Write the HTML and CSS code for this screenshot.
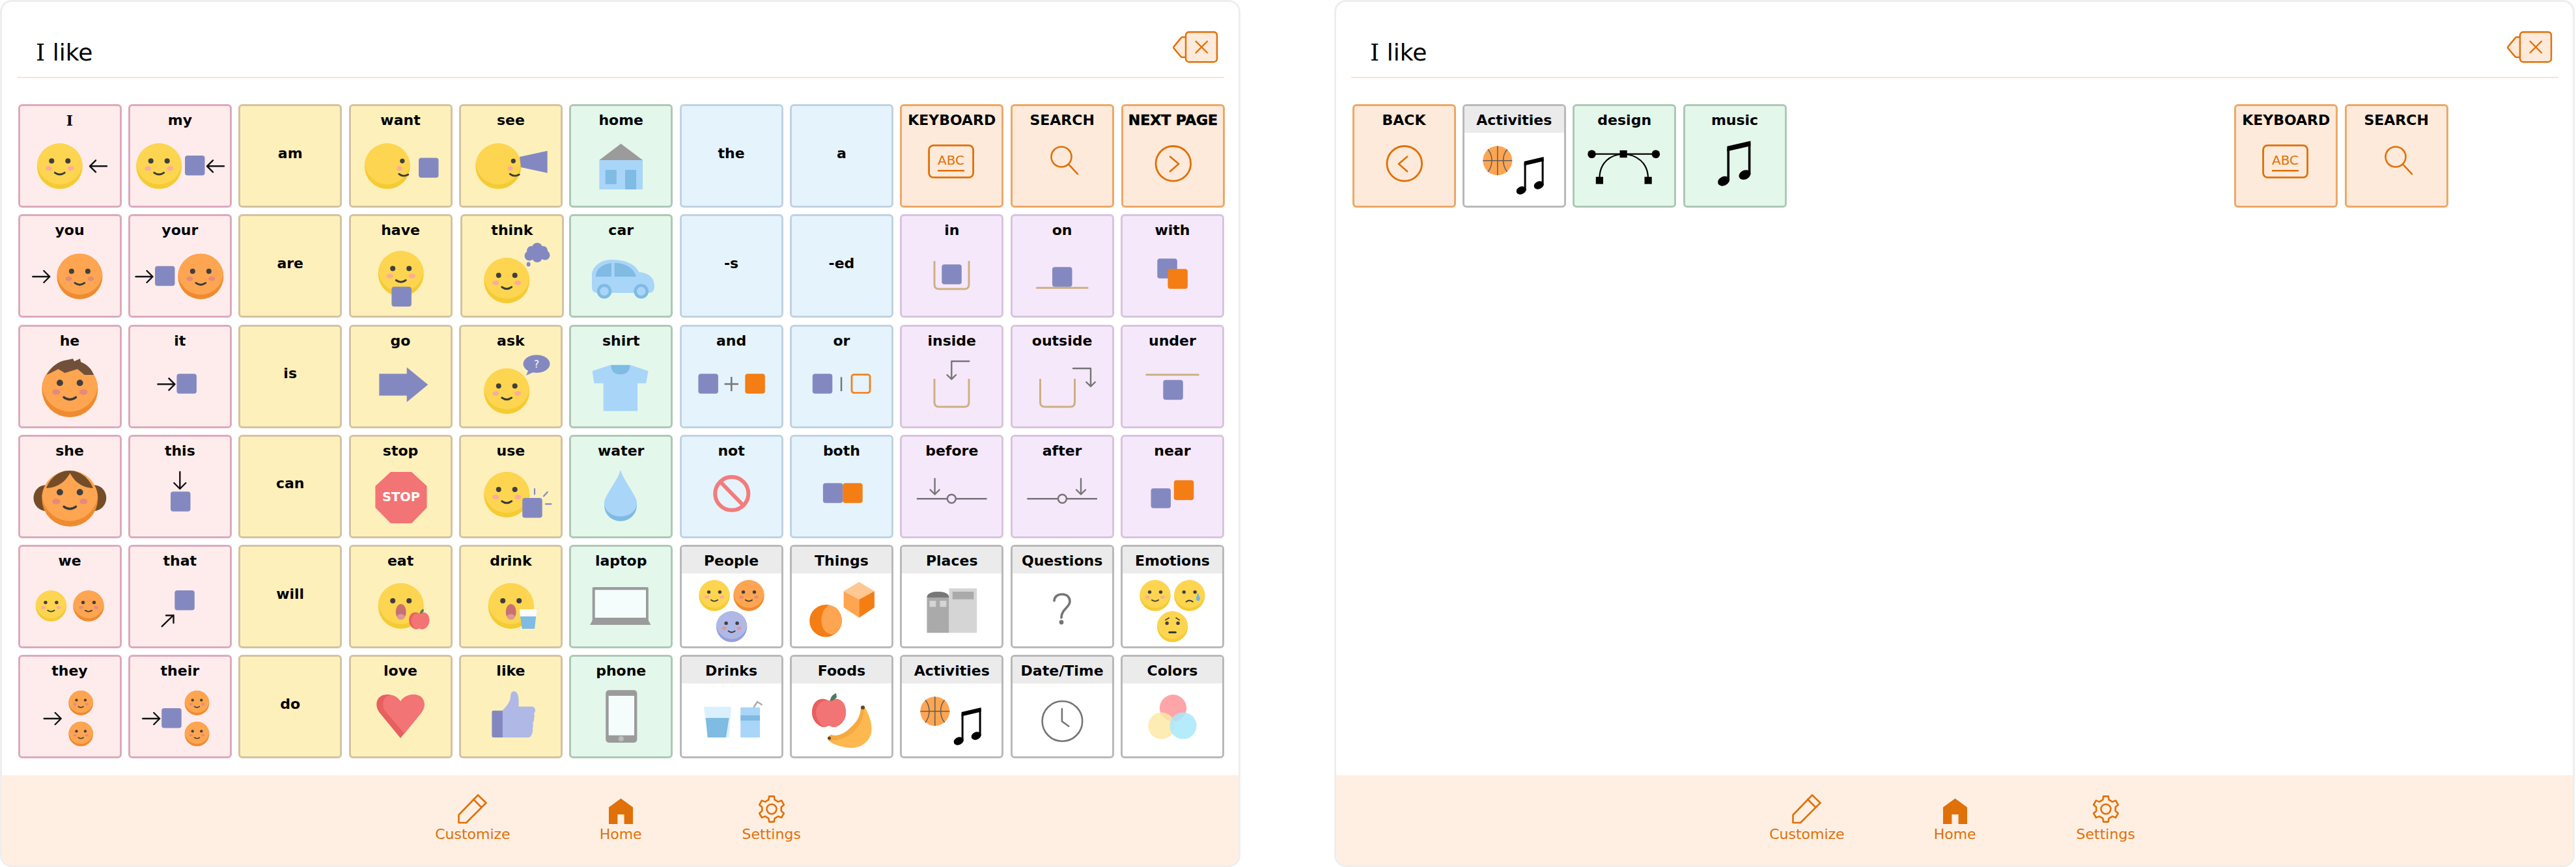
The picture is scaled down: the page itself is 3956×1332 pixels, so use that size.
FILE: index.html
```html
<!DOCTYPE html>
<html lang="en">
<head>
<meta charset="utf-8">
<title>I like</title>
<link rel="stylesheet" href="styles.css">
</head>
<body>
<svg class="defs" aria-hidden="true">
  <defs>
    <g id="feat"><circle cx="-12.5" cy="-8" r="4" fill="#3f3f3f"/><circle cx="12.5" cy="-8" r="4" fill="#3f3f3f"/><path d="M-7.5 10 Q0 15.5 7.5 10" fill="none" stroke="#3a3a3a" stroke-width="2.8" stroke-linecap="round"/></g>
    <g id="by"><circle r="35" fill="#f4cb33"/><path d="M-34.82 -3.5A35 35 0 0 1 34.82 -3.5A35 35 0 0 1 -34.82 -3.5Z" fill="#fdd550"/></g>
    <g id="bo"><circle r="35" fill="#ef8b2f"/><path d="M-34.82 -3.5A35 35 0 0 1 34.82 -3.5A35 35 0 0 1 -34.82 -3.5Z" fill="#fea551"/></g>
    <g id="bp"><circle r="35" fill="#979fdb"/><path d="M-34.82 -3.5A35 35 0 0 1 34.82 -3.5A35 35 0 0 1 -34.82 -3.5Z" fill="#b0b8e6"/></g>
    <g id="fy"><use href="#by"/><ellipse cx="-17" cy="3.5" rx="5" ry="3.5" fill="#fdaaa0"/><ellipse cx="17" cy="3.5" rx="5" ry="3.5" fill="#fdaaa0"/><use href="#feat"/></g>
    <g id="fo"><use href="#bo"/><ellipse cx="-17" cy="3.5" rx="5" ry="3.5" fill="#e58a7c"/><ellipse cx="17" cy="3.5" rx="5" ry="3.5" fill="#e58a7c"/><use href="#feat"/></g>
    <g id="fp"><use href="#bp"/><ellipse cx="-17" cy="3.5" rx="5" ry="3.5" fill="#e8948f"/><ellipse cx="17" cy="3.5" rx="5" ry="3.5" fill="#e8948f"/><use href="#feat"/></g>
    <g id="side"><use href="#by"/><circle cx="23" cy="-8" r="3.6" fill="#3f3f3f"/><ellipse cx="18.5" cy="3.5" rx="4" ry="3.5" fill="#fdaaa0"/><path d="M18 12 Q24 17 32 13" fill="none" stroke="#3a3a3a" stroke-width="2.8" stroke-linecap="round"/></g>
    <g id="gasp"><use href="#by"/><circle cx="-12.5" cy="-8" r="4" fill="#3f3f3f"/><circle cx="12.5" cy="-8" r="4" fill="#3f3f3f"/><ellipse cx="0" cy="9" rx="8" ry="12" fill="#c97073"/><path d="M-6.6 15.5 Q0 9 6.6 15.5 Q4 21 0 21 Q-4 21 -6.6 15.5Z" fill="#d99a9a"/></g>
    <rect id="bk" width="30.5" height="30.5" rx="4" fill="#8389c0"/>
    <rect id="ok" width="30.5" height="30.5" rx="4" fill="#f47d14"/>
    <path id="ar" d="M0 0H26M17 -9L26 0L17 9" fill="none" stroke="#111" stroke-width="2.4" stroke-linecap="round" stroke-linejoin="round"/>
    <path id="ga" d="M0 0H24M17 -7L24 0L17 7" fill="none" stroke="#757575" stroke-width="2.4" stroke-linecap="round" stroke-linejoin="round"/>
    <path id="cup" d="M0 0V36Q0 43 7 43H46Q53 43 53 36V0" fill="none" stroke="#cdb082" stroke-width="3"/>
    <g id="apple"><path d="M0 -18C6 -24 26 -24 26 0C26 14 14 22 8 22C4 22 2 20 0 20C-2 20 -4 22 -8 22C-14 22 -26 14 -26 0C-26 -24 -6 -24 0 -18Z" fill="#e85f60"/><path d="M2 -18C8 -23 26 -24 26 0C26 14 14 22 8 22C4 22 2 20 0 20C-4 21 -6 22 -8 21.5C-14 18 -20 8 -20 0C-20 -14 -8 -22 2 -18Z" fill="#f27474"/><path d="M2 -18C2 -24 6 -28 11 -30L12 -24C9 -20 5 -18 2 -18Z" fill="#4e7b5d"/></g>
    <g id="note"><path d="M13.5 51V9M40.5 43V2" fill="none" stroke="#000" stroke-width="3"/><path d="M12 6.5L42 -0.5V6L12 13Z" fill="#000"/><ellipse cx="7.5" cy="51" rx="7.8" ry="5.8" transform="rotate(-25 7.5 51)" fill="#000"/><ellipse cx="34.5" cy="43" rx="7.8" ry="5.8" transform="rotate(-25 34.5 43)" fill="#000"/></g>
    <g id="ico-keyboard"><rect x="41.6" y="19.3" width="68" height="49.4" rx="7" fill="none" stroke="#e07008" stroke-width="2.8"/><text class="abc" x="75.5" y="49.3">ABC</text><path d="M55 58.3H96" stroke="#e07008" stroke-width="2.5"/></g>
    <g id="ico-search" fill="none" stroke="#e07008" stroke-width="2.6" stroke-linecap="round"><circle cx="75" cy="37" r="15.5"/><path d="M86 48.3L100 63.3"/></g>
    <g id="ico-activities"><circle cx="50.8" cy="42.7" r="22.5" fill="#fea551"/><g fill="none" stroke="#5e5e5e" stroke-width="1.5"><path d="M50.8 20.2V65.2M28.3 42.7H73.3"/><path d="M36 25.5C44 35 44 50 36 60"/><path d="M65.6 25.5C57.6 35 57.6 50 65.6 60"/></g><use href="#note" x="79.6" y="37.5"/></g>
    <g id="ico-circle"><circle cx="76.8" cy="47.3" r="26.8" fill="none" stroke="#e07008" stroke-width="2.8"/></g>
  </defs>
</svg>

<main class="desk">
  <section class="panel">
    <header class="head">
      <div class="title"><span class="ser">I</span> like</div>
      <svg class="del" viewBox="0 0 70 49" width="70" height="49"><path d="M20 9H15Q13 9 12 11L1.5 24Q1 25 1.5 26L12 38.5Q13 40 15 40H20" fill="#feeada" stroke="#e07008" stroke-width="2.5"/><rect x="20" y="1.2" width="48" height="46" rx="5" fill="#feeada" stroke="#e07008" stroke-width="2.5"/><path d="M35.5 15.5L53 33M53 15.5L35.5 33" stroke="#e07008" stroke-width="2.4" stroke-linecap="round"/></svg>
    </header>
    <div class="grid">
      <!-- row 1 -->
      <div class="card pink"><div class="label"><span class="ser">I</span></div><svg class="ico" viewBox="0 0 153 112"><use href="#fy" transform="translate(60.8 51.3)"/><use href="#ar" transform="translate(133 51.3) rotate(180)"/></svg></div>
      <div class="card pink"><div class="label">my</div><svg class="ico" viewBox="0 0 153 112"><use href="#fy" transform="translate(44.2 51.3)"/><use href="#bk" x="84" y="35"/><use href="#ar" transform="translate(144 51.3) rotate(180)"/></svg></div>
      <div class="card yellow word"><div class="label">am</div></div>
      <div class="card yellow"><div class="label">want</div><svg class="ico" viewBox="0 0 153 112"><use href="#side" transform="translate(55.8 51.3)"/><use href="#bk" x="104" y="38.5"/></svg></div>
      <div class="card yellow"><div class="label">see</div><svg class="ico" viewBox="0 0 153 112"><use href="#side" transform="translate(57.3 51.3)"/><path d="M90 37L132.6 27.7V61.7L92 53Z" fill="#8389c0"/></svg></div>
      <div class="card green"><div class="label">home</div><svg class="ico" viewBox="0 0 153 112"><path d="M43.4 42L76.5 16.7L110 42Z" fill="#9b9b9b"/><rect x="43.4" y="42" width="66.6" height="45" fill="#a9d5f9"/><rect x="52.8" y="57" width="17" height="22" rx="1" fill="#7fbbe2"/><rect x="83" y="57" width="17" height="30" rx="1" fill="#7fbbe2"/></svg></div>
      <div class="card blue word"><div class="label">the</div></div>
      <div class="card blue word"><div class="label">a</div></div>
      <div class="card orange"><div class="label">KEYBOARD</div><svg class="ico" viewBox="0 0 153 112"><use href="#ico-keyboard"/></svg></div>
      <div class="card orange"><div class="label">SEARCH</div><svg class="ico" viewBox="0 0 153 112"><use href="#ico-search"/></svg></div>
      <div class="card orange nudge-1"><div class="label heavy">NEXT PAGE</div><svg class="ico" viewBox="0 0 153 112"><use href="#ico-circle"/><path d="M72 36.7L85.2 47.7L72 59.3" fill="none" stroke="#e07008" stroke-width="2.6" stroke-linecap="round" stroke-linejoin="round"/></svg></div>
      <!-- row 2 -->
      <div class="card pink"><div class="label">you</div><svg class="ico" viewBox="0 0 153 112"><use href="#ar" transform="translate(19.3 52)"/><use href="#fo" transform="translate(91.4 51.7)"/></svg></div>
      <div class="card pink"><div class="label">your</div><svg class="ico" viewBox="0 0 153 112"><use href="#ar" transform="translate(8.5 52)"/><use href="#bk" x="38" y="35.7"/><use href="#fo" transform="translate(108.3 51.7)"/></svg></div>
      <div class="card yellow word"><div class="label">are</div></div>
      <div class="card yellow"><div class="label">have</div><svg class="ico" viewBox="0 0 153 112"><use href="#fy" transform="translate(76.7 47.5)"/><use href="#bk" x="62.4" y="67.5"/></svg></div>
      <div class="card yellow nudge-2"><div class="label">think</div><svg class="ico" viewBox="0 0 153 112"><use href="#fy" transform="translate(68.2 58)"/><g fill="#8389c0"><circle cx="115" cy="15" r="10"/><circle cx="115" cy="8" r="8"/><circle cx="106" cy="12" r="7"/><circle cx="124" cy="12" r="7"/><circle cx="103" cy="20" r="7.5"/><circle cx="127" cy="19" r="7.5"/><circle cx="115" cy="22" r="8"/><ellipse cx="101.6" cy="33" rx="3" ry="3.6"/></g></svg></div>
      <div class="card green"><div class="label">car</div><svg class="ico" viewBox="0 0 153 112"><path d="M32 68V50C32 36 46 26 62 26C82 26 98 32 104.5 45C118 46 128 53 128 66C128 73 125 77 120 77H40C35 77 32 74 32 68Z" fill="#a9d5f9"/><path d="M38 52C38 40 48 33 62 31V52Z" fill="#7fbbe2"/><path d="M66.6 31C82 31 96 38 100 52H66.6Z" fill="#7fbbe2"/><g fill="#a9d5f9" stroke="#7fbbe2" stroke-width="4.5"><circle cx="51" cy="74.5" r="9"/><circle cx="107.7" cy="74.5" r="9"/></g></svg></div>
      <div class="card blue word"><div class="label">-s</div></div>
      <div class="card blue word"><div class="label">-ed</div></div>
      <div class="card purple"><div class="label">in</div><svg class="ico" viewBox="0 0 153 112"><use href="#cup" x="50" y="28"/><use href="#bk" x="61.3" y="33.3"/></svg></div>
      <div class="card purple"><div class="label">on</div><svg class="ico" viewBox="0 0 153 112"><use href="#bk" x="61" y="37.3"/><path d="M37.5 69.3H115" stroke="#cdb082" stroke-width="3" stroke-linecap="round"/></svg></div>
      <div class="card purple"><div class="label">with</div><svg class="ico" viewBox="0 0 153 112"><use href="#bk" x="53.3" y="24.3"/><use href="#ok" x="69.4" y="40.3"/></svg></div>
      <!-- row 3 -->
      <div class="card pink"><div class="label">he</div><svg class="ico" viewBox="0 0 153 112"><use href="#fo" transform="translate(76.3 55) scale(1.23)"/><path d="M40.7 33C48 20 58 12 72 10L81 8L83 12L92 8L93 13C103 17 110 24 113 33H99L88 24L68.5 30L58.6 24Z" fill="#715039"/></svg></div>
      <div class="card pink"><div class="label">it</div><svg class="ico" viewBox="0 0 153 112"><use href="#ar" transform="translate(42.4 47.3)"/><use href="#bk" x="71.4" y="31.3"/></svg></div>
      <div class="card yellow word"><div class="label">is</div></div>
      <div class="card yellow"><div class="label">go</div><svg class="ico" viewBox="0 0 153 112"><path d="M43.3 31.3H85.7V21.3L118.3 48L85.7 74.7V64.7H43.3Z" fill="#8389c0"/></svg></div>
      <div class="card yellow"><div class="label">ask</div><svg class="ico" viewBox="0 0 153 112"><use href="#fy" transform="translate(70.2 58)"/><ellipse cx="116" cy="16" rx="20.5" ry="13.7" fill="#8389c0"/><path d="M100 33.7L105 22L113 28Z" fill="#8389c0"/><text class="bubble-q" x="116" y="22">?</text></svg></div>
      <div class="card green"><div class="label">shirt</div><svg class="ico" viewBox="0 0 153 112"><path d="M33.1 27.3L61.3 18H90.3L118 27.3L114.8 45.3H101.5V88H50.1V45.3H35.8Z" fill="#a9d5f9" stroke="#a9d5f9" stroke-linejoin="round"/><path d="M61.3 18H90.3C90.3 28 84 32.3 75.8 32.3C67.6 32.3 61.3 28 61.3 18Z" fill="#7fbbe2"/></svg></div>
      <div class="card blue"><div class="label">and</div><svg class="ico" viewBox="0 0 153 112"><use href="#bk" x="25.4" y="31.3"/><path d="M65.6 47H87M76.3 36V58" stroke="#757575" stroke-width="2.5"/><use href="#ok" x="97.3" y="31.3"/></svg></div>
      <div class="card blue"><div class="label">or</div><svg class="ico" viewBox="0 0 153 112"><use href="#bk" x="31.8" y="31.3"/><path d="M76 36.3V58" stroke="#757575" stroke-width="2.5"/><rect x="92" y="32.5" width="28" height="28" rx="3.5" fill="none" stroke="#f47d14" stroke-width="2.7"/></svg></div>
      <div class="card purple"><div class="label">inside</div><svg class="ico" viewBox="0 0 153 112"><use href="#cup" x="50" y="39"/><path d="M103.3 12H76.3V39.5M69.5 33L76.3 39.7L83 33" fill="none" stroke="#757575" stroke-width="2.4" stroke-linecap="round" stroke-linejoin="round"/></svg></div>
      <div class="card purple"><div class="label">outside</div><svg class="ico" viewBox="0 0 153 112"><use href="#cup" x="42.5" y="39"/><path d="M93 23H120V50.5M113.2 44L120 50.7L126.8 44" fill="none" stroke="#757575" stroke-width="2.4" stroke-linecap="round" stroke-linejoin="round"/></svg></div>
      <div class="card purple"><div class="label">under</div><svg class="ico" viewBox="0 0 153 112"><path d="M36.8 32.7H116.3" stroke="#cdb082" stroke-width="3" stroke-linecap="round"/><use href="#bk" x="62.3" y="40.7"/></svg></div>
      <!-- row 4 -->
      <div class="card pink"><div class="label">she</div><svg class="ico" viewBox="0 0 153 112"><ellipse cx="40" cy="53" rx="19.5" ry="20" fill="#744d28"/><ellipse cx="112.7" cy="53" rx="19.5" ry="20" fill="#744d28"/><use href="#fo" transform="translate(76.3 54) scale(1.23)"/><path d="M40 38C46 22 60 11 75.6 11C91 11 106 22 112 38C98 37 86 32 76.5 15C67 32 54 37 40 38Z" fill="#744d28"/></svg></div>
      <div class="card pink"><div class="label">this</div><svg class="ico" viewBox="0 0 153 112"><use href="#ar" transform="translate(76.3 13) rotate(90)"/><use href="#bk" x="62" y="43.3"/></svg></div>
      <div class="card yellow word"><div class="label">can</div></div>
      <div class="card yellow"><div class="label">stop</div><svg class="ico" viewBox="0 0 153 112"><path d="M61 13H93L116.5 34.7V68L93 92H61L37.4 68V34.7Z" fill="#f27474"/><text class="stop" x="77" y="58">STOP</text></svg></div>
      <div class="card yellow"><div class="label">use</div><svg class="ico" viewBox="0 0 153 112"><use href="#fy" transform="translate(70.2 48)"/><use href="#bk" x="94.2" y="53"/><path d="M113 39V47.3M127 50.3L132.7 44M130 62.3H138.5" stroke="#8389c0" stroke-width="2.2" stroke-linecap="round"/></svg></div>
      <div class="card green"><div class="label">water</div><svg class="ico" viewBox="0 0 153 112"><path d="M76 10.7C80 26 101 50 101 64C101 78 90 88.7 76 88.7C62 88.7 51 78 51 64C51 50 72 26 76 10.7Z" fill="#7fbbe2"/><path d="M76 10.7C80 26 101 50 101 60C101 73 90 81.3 76 81.3C62 81.3 51 73 51 60C51 50 72 26 76 10.7Z" fill="#a9d5f9"/></svg></div>
      <div class="card blue"><div class="label">not</div><svg class="ico" viewBox="0 0 153 112"><circle cx="76.8" cy="46.3" r="25.5" fill="none" stroke="#f27c7c" stroke-width="6"/><path d="M59 28L95 65" stroke="#f27c7c" stroke-width="6"/></svg></div>
      <div class="card blue"><div class="label">both</div><svg class="ico" viewBox="0 0 153 112"><use href="#bk" x="47.9" y="30.3"/><use href="#ok" x="78.2" y="30.3"/></svg></div>
      <div class="card purple"><div class="label">before</div><svg class="ico" viewBox="0 0 153 112"><path d="M22.9 54.3H130.5" stroke="#757575" stroke-width="2.5"/><circle cx="76.3" cy="54.3" r="6.5" fill="#f5e8fb" stroke="#757575" stroke-width="2.5"/><use href="#ga" transform="translate(50.6 23.5) rotate(90)"/></svg></div>
      <div class="card purple"><div class="label">after</div><svg class="ico" viewBox="0 0 153 112"><path d="M22.3 54.3H129.9" stroke="#757575" stroke-width="2.5"/><circle cx="76.4" cy="54.3" r="6.5" fill="#f5e8fb" stroke="#757575" stroke-width="2.5"/><use href="#ga" transform="translate(105 23.5) rotate(90)"/></svg></div>
      <div class="card purple"><div class="label">near</div><svg class="ico" viewBox="0 0 153 112"><use href="#ok" x="78.8" y="25.7"/><use href="#bk" x="43.5" y="38.3"/></svg></div>
      <!-- row 5 -->
      <div class="card pink"><div class="label">we</div><svg class="ico" viewBox="0 0 153 112"><use href="#fy" transform="translate(47.4 50) scale(.677)"/><use href="#fo" transform="translate(105 50) scale(.677)"/></svg></div>
      <div class="card pink"><div class="label">that</div><svg class="ico" viewBox="0 0 153 112"><use href="#bk" x="68.3" y="26"/><path d="M48.7 81.3L66.5 64M55 64.5H66.5V76" fill="none" stroke="#111" stroke-width="2.4" stroke-linecap="round" stroke-linejoin="round"/></svg></div>
      <div class="card yellow word"><div class="label">will</div></div>
      <div class="card yellow"><div class="label">eat</div><svg class="ico" viewBox="0 0 153 112"><use href="#gasp" transform="translate(76.7 50)"/><use href="#apple" transform="translate(104.7 72.5) scale(.6)"/></svg></div>
      <div class="card yellow"><div class="label">drink</div><svg class="ico" viewBox="0 0 153 112"><use href="#gasp" transform="translate(76.7 50)"/><path d="M89.8 55H116.5L115.2 66H91Z" fill="#fff"/><path d="M91 66H115.2L113 85H93.8Z" fill="#7fbbe2"/></svg></div>
      <div class="card green"><div class="label">laptop</div><svg class="ico" viewBox="0 0 153 112"><rect x="32.7" y="21" width="86.1" height="54" rx="2" fill="#9b9b9b"/><rect x="36.7" y="25.3" width="78.3" height="42.7" fill="#f5fdfc"/><path d="M32.7 72.3H118.8L122.4 79H29.1Z" fill="#9b9b9b"/></svg></div>
      <div class="card cat"><div class="label">People</div><svg class="ico" viewBox="0 0 153 112"><use href="#fy" transform="translate(50 34) scale(.677)"/><use href="#fo" transform="translate(103 34) scale(.677)"/><use href="#fp" transform="translate(76.6 81.8) scale(.677)"/></svg></div>
      <div class="card cat"><div class="label">Things</div><svg class="ico" viewBox="0 0 153 112"><circle cx="52" cy="72.8" r="24.8" fill="#f47d14"/><path d="M57 48.5C69 50 77 60 76.8 72.8C76.6 82 72 90 64 93.5C55 94 48 88 46 78C44 65 48 54 57 48.5Z" fill="#fea551"/><path d="M103.3 13L126.9 27.3L103.3 40L79.6 27.3Z" fill="#fec793"/><path d="M79.6 27.3L103.3 40V68L79.6 52.3Z" fill="#fea551"/><path d="M126.9 27.3L103.3 40V68L126.9 52.3Z" fill="#f47d14"/></svg></div>
      <div class="card cat"><div class="label">Places</div><svg class="ico" viewBox="0 0 153 112"><rect x="72.4" y="23" width="42.8" height="68.3" rx="1" fill="#d5d5d5"/><rect x="77.8" y="28" width="32.6" height="11.7" fill="#aaa"/><path d="M38.5 37C38.5 31 46 28 55.5 28C65 28 72.4 31 72.4 37V91.3H38.5Z" fill="#aaa"/><path d="M38.5 37C38.5 31 46 28 55.5 28C65 28 72.4 31 72.4 37Z" fill="#777"/><rect x="42.5" y="42" width="9.8" height="9.3" fill="#d5d5d5"/><rect x="58.5" y="42" width="9.9" height="9.3" fill="#d5d5d5"/></svg></div>
      <div class="card cat"><div class="label">Questions</div><svg class="ico" viewBox="0 0 153 112"><path d="M64 42C64 36 69 32 76 32C84 32 88 37 88 43C88 52 75 55 75 68" fill="none" stroke="#757575" stroke-width="3.6" stroke-linecap="round"/><circle cx="75" cy="75" r="3.4" fill="#757575"/></svg></div>
      <div class="card cat"><div class="label">Emotions</div><svg class="ico" viewBox="0 0 153 112"><use href="#fy" transform="translate(50 34) scale(.677)"/><g transform="translate(102.7 34) scale(.677)"><use href="#by"/><circle cx="-12.5" cy="-8" r="4" fill="#3f3f3f"/><circle cx="12.5" cy="-8" r="4" fill="#3f3f3f"/><path d="M-7.5 14 Q0 8 7.5 14" fill="none" stroke="#3a3a3a" stroke-width="3" stroke-linecap="round"/><path d="M19 -6C22 0 24 4 24 7C24 10 22 12 19.5 12C17 12 15 10 15 7C15 4 17 0 19 -6Z" fill="#6db7e8"/></g><g transform="translate(76.6 81.8) scale(.677)"><use href="#by"/><circle cx="-12.5" cy="-8" r="4" fill="#3f3f3f"/><circle cx="12.5" cy="-8" r="4" fill="#3f3f3f"/><path d="M-16 -15L-8 -20M16 -15L8 -20" stroke="#3a3a3a" stroke-width="2.4" stroke-linecap="round"/><path d="M-7 13H7" stroke="#3a3a3a" stroke-width="4.5" stroke-linecap="round"/></g></svg></div>
      <!-- row 6 -->
      <div class="card pink"><div class="label">they</div><svg class="ico" viewBox="0 0 153 112"><use href="#ar" transform="translate(36.7 54)"/><use href="#fo" transform="translate(93.2 30) scale(.54)"/><use href="#fo" transform="translate(93.2 77.7) scale(.54)"/></svg></div>
      <div class="card pink"><div class="label">their</div><svg class="ico" viewBox="0 0 153 112"><use href="#ar" transform="translate(19.2 54)"/><use href="#bk" x="48.2" y="38"/><use href="#fo" transform="translate(102.5 30) scale(.54)"/><use href="#fo" transform="translate(102.5 77.7) scale(.54)"/></svg></div>
      <div class="card yellow word"><div class="label">do</div></div>
      <div class="card yellow"><div class="label">love</div><svg class="ico" viewBox="0 0 153 112"><path d="M76 84L44 45C35 33 39 17 56 17C66 17 73 22 76 28C79 22 87 17 96 17C113 17 117 34 108 45Z" fill="#e85f60"/><path d="M82 77L108 45C117 34 113 17 96 17C87 17 79 22 76 28C73 23 68 19 62 18C50 18 46 32 52 42Z" fill="#f27474"/></svg></div>
      <div class="card yellow"><div class="label">like</div><svg class="ico" viewBox="0 0 153 112"><path d="M64 41C70 35 76 28 76 20C76 14 79 12 81 12C86 12 88 18 88.5 24V35.5H108C112 35.5 114 38 114 41C114 44 113 45 112 46C113 48 113 52 112 55C112 58 111 60 110 61C111 63 111 66 110 69C111 71 109 83 104 83H64Z" fill="#b0b8e6"/><path d="M64 41.7H50Q47.4 41.7 47.4 44V81Q47.4 83 50 83H64Z" fill="#8389c0"/></svg></div>
      <div class="card green"><div class="label">phone</div><svg class="ico" viewBox="0 0 153 112"><rect x="53.2" y="10.3" width="48.2" height="80.7" rx="5" fill="#9b9b9b"/><rect x="57.7" y="19" width="39.3" height="60.7" fill="#f5fdfc"/><circle cx="76.9" cy="85" r="4" fill="#bdbdbd"/></svg></div>
      <div class="card cat"><div class="label">Drinks</div><svg class="ico" viewBox="0 0 153 112"><path d="M33.9 36H75.9L72.5 83H39.7Z" fill="#d9f1fd"/><path d="M36.8 53H72.6L67.8 83H39.7Z" fill="#7fbbe2"/><path d="M110.3 37L116 28.3L123.6 33" fill="none" stroke="#a8a8a8" stroke-width="2.4"/><rect x="90.2" y="36.7" width="29.8" height="46.3" rx="1" fill="#a9d5f9"/><rect x="90.2" y="49" width="29.8" height="8" fill="#7fbbe2"/></svg></div>
      <div class="card cat"><div class="label">Foods</div><svg class="ico" viewBox="0 0 153 112"><use href="#apple" transform="translate(57 45)"/><path d="M106 37C108 35 112 36 113 38C120 50 124 65 122 76C119 90 105 100 90 99C75 98 62 93 57 88C55 84 57 80 60 79C70 82 80 78 90 68C102 58 106 47 106 37Z" fill="#feb84f"/><path d="M106 37C108 35 110 36 111 37C111 52 104 68 92 77C80 86 68 88 57 88C55 84 57 80 60 79C70 82 80 78 90 68C102 58 106 47 106 37Z" fill="#f5aa3f"/><circle cx="109" cy="37" r="3" fill="#5f4a30"/><circle cx="57.5" cy="84" r="2.6" fill="#5f4a30"/></svg></div>
      <div class="card cat"><div class="label">Activities</div><svg class="ico" viewBox="0 0 153 112"><use href="#ico-activities"/></svg></div>
      <div class="card cat"><div class="label">Date/Time</div><svg class="ico" viewBox="0 0 153 112"><circle cx="76.4" cy="58" r="30.8" fill="none" stroke="#757575" stroke-width="2.6"/><path d="M75.9 39V58.3L86.2 65.7" fill="none" stroke="#757575" stroke-width="2.6" stroke-linecap="round" stroke-linejoin="round"/></svg></div>
      <div class="card cat"><div class="label">Colors</div><svg class="ico" viewBox="0 0 153 112"><circle cx="77.5" cy="37.7" r="20.6" fill="#fea5a9"/><circle cx="59.8" cy="65" r="20.6" fill="#fde9a6" opacity=".85"/><circle cx="93" cy="65" r="20.6" fill="#a9e8fa" opacity=".85"/></svg></div>
    </div>
    <footer class="foot">
      <div class="foot-item"><svg class="foot-ico" viewBox="0 0 45 46" width="45" height="46"><path d="M31 1.5L43.5 13.5L13 44H1.5V32Z M24 8L36.5 20.5" fill="none" stroke="#e07008" stroke-width="2.6" stroke-linejoin="round" stroke-linecap="round"/></svg><span>Customize</span></div>
      <div class="foot-item"><svg class="foot-ico" viewBox="0 0 37 46" width="37" height="46"><path d="M18.5 6.7L37 20.2V46H23.6V31.2H13.4V46H0V20.2Z" fill="#e07008"/></svg><span>Home</span></div>
      <div class="foot-item far"><svg class="foot-ico" viewBox="0 0 40 46" width="40" height="46"><g transform="translate(0 2)" fill="none" stroke="#e07008" stroke-width="2.6" stroke-linejoin="round"><path d="M24.6 6.7L23.8 1.4H16.2L15.4 6.7L10 9.9L4.9 7.9L1.1 14.5L5.3 17.9V24.1L1.1 27.5L4.9 34.1L10 32.1L15.4 35.3L16.2 40.6H23.8L24.6 35.3L30 32.1L35.1 34.1L38.9 27.5L34.7 24.1V17.9L38.9 14.5L35.1 7.9L30 9.9Z"/><circle cx="20" cy="21" r="7.5"/></g></svg><span>Settings</span></div>
    </footer>
  </section>

  <section class="panel">
    <header class="head">
      <div class="title"><span class="ser">I</span> like</div>
      <svg class="del" viewBox="0 0 70 49" width="70" height="49"><path d="M20 9H15Q13 9 12 11L1.5 24Q1 25 1.5 26L12 38.5Q13 40 15 40H20" fill="#feeada" stroke="#e07008" stroke-width="2.5"/><rect x="20" y="1.2" width="48" height="46" rx="5" fill="#feeada" stroke="#e07008" stroke-width="2.5"/><path d="M35.5 15.5L53 33M53 15.5L35.5 33" stroke="#e07008" stroke-width="2.4" stroke-linecap="round"/></svg>
    </header>
    <div class="grid">
      <div class="card orange"><div class="label">BACK</div><svg class="ico" viewBox="0 0 153 112"><use href="#ico-circle"/><path d="M81 36.7L68 47.7L81 59.3" fill="none" stroke="#e07008" stroke-width="2.6" stroke-linecap="round" stroke-linejoin="round"/></svg></div>
      <div class="card cat"><div class="label">Activities</div><svg class="ico" viewBox="0 0 153 112"><use href="#ico-activities"/></svg></div>
      <div class="card green"><div class="label">design</div><svg class="ico" viewBox="0 0 153 112"><path d="M26.5 32.7H124.9" stroke="#000" stroke-width="2.2"/><path d="M38.4 70C38.4 46 55 33 75 33C95 33 113 46 113 70" fill="none" stroke="#000" stroke-width="2.2"/><circle cx="26.5" cy="32.7" r="6.3"/><circle cx="124.9" cy="32.7" r="6.3"/><rect x="69.5" y="27" width="11.2" height="11.2"/><rect x="32.8" y="67.7" width="11.2" height="11"/><rect x="107.5" y="67.7" width="11.2" height="11"/></svg></div>
      <div class="card green"><div class="label">music</div><svg class="ico" viewBox="0 0 153 112"><use href="#note" transform="translate(50 13) scale(1.2)"/></svg></div>
      <div class="card orange col-9"><div class="label">KEYBOARD</div><svg class="ico" viewBox="0 0 153 112"><use href="#ico-keyboard"/></svg></div>
      <div class="card orange"><div class="label">SEARCH</div><svg class="ico" viewBox="0 0 153 112"><use href="#ico-search"/></svg></div>
    </div>
    <footer class="foot">
      <div class="foot-item"><svg class="foot-ico" viewBox="0 0 45 46" width="45" height="46"><path d="M31 1.5L43.5 13.5L13 44H1.5V32Z M24 8L36.5 20.5" fill="none" stroke="#e07008" stroke-width="2.6" stroke-linejoin="round" stroke-linecap="round"/></svg><span>Customize</span></div>
      <div class="foot-item"><svg class="foot-ico" viewBox="0 0 37 46" width="37" height="46"><path d="M18.5 6.7L37 20.2V46H23.6V31.2H13.4V46H0V20.2Z" fill="#e07008"/></svg><span>Home</span></div>
      <div class="foot-item far"><svg class="foot-ico" viewBox="0 0 40 46" width="40" height="46"><g transform="translate(0 2)" fill="none" stroke="#e07008" stroke-width="2.6" stroke-linejoin="round"><path d="M24.6 6.7L23.8 1.4H16.2L15.4 6.7L10 9.9L4.9 7.9L1.1 14.5L5.3 17.9V24.1L1.1 27.5L4.9 34.1L10 32.1L15.4 35.3L16.2 40.6H23.8L24.6 35.3L30 32.1L35.1 34.1L38.9 27.5L34.7 24.1V17.9L38.9 14.5L35.1 7.9L30 9.9Z"/><circle cx="20" cy="21" r="7.5"/></g></svg><span>Settings</span></div>
    </footer>
  </section>
</main>
</body>
</html>
```
FILE: styles.css
```css
* { box-sizing: border-box; }
html, body { margin: 0; padding: 0; background: #fff; }
body { width: 3956px; height: 1332px; overflow: hidden; font-family: "DejaVu Sans", Verdana, sans-serif; color: #000; }
.defs { width: 0; height: 0; display: block; overflow: hidden; }
.desk { display: flex; gap: 144px; height: 1332px; }
.panel { width: 1905px; height: 1332px; flex: none; display: flex; flex-direction: column; border: 3px solid #eee; border-radius: 18px; overflow: hidden; background: #fff; }
.head { display: flex; justify-content: space-between; align-items: flex-start; height: 116.5px; margin: 0 22px 0 23px; border-bottom: 2.5px solid #ffe2cb; flex: none; }
.title { font-size: 36px; line-height: 40px; padding: 58px 0 0 29px; }
.ser { font-family: "DejaVu Serif", "DejaVu Sans", serif; }
.del { margin: 45px 9px 0 0; display: block; }
.grid { display: grid; grid-template-columns: repeat(11, 159px); grid-template-rows: repeat(6, 159px); column-gap: 10.35px; row-gap: 10.3px; margin: 40.5px 0 0 24.5px; flex: none; }
.card { display: flex; flex-direction: column; width: 159px; height: 159px; border: 3px solid #b9b9b9; border-radius: 6px; background: #fff; }
.label { height: 41px; padding-top: 3px; line-height: 38px; font-size: 22px; font-weight: 700; text-align: center; white-space: nowrap; flex: none; }
.ico { display: block; width: 153px; height: 112px; flex: none; overflow: visible; }
.word { justify-content: center; padding-bottom: 8px; }
.word .label { padding-top: 0; height: 38px; }
.pink { background: #feeced; border-color: #dcaabc; }
.yellow { background: #fef0bb; border-color: #d4c3a0; }
.green { background: #e3f7eb; border-color: #adc8b6; }
.blue { background: #e5f3fc; border-color: #c0d2e2; }
.orange { background: #feeada; border-color: #eca868; }
.purple { background: #f5e8fb; border-color: #d8c4de; }
.cat .label { background: #ebebeb; border-radius: 3px 3px 0 0; }
.col-9 { grid-column: 9; }
.heavy { -webkit-text-stroke: .6px #000; }
.nudge-1 { transform: translateX(1px); }
.nudge-2 { transform: translateX(2px); }
.abc { font: 400 20px "DejaVu Sans", sans-serif; fill: #e07008; text-anchor: middle; }
.bubble-q { font: 400 15px "DejaVu Sans", sans-serif; fill: #fff; text-anchor: middle; }
.stop { font: 700 19.5px "DejaVu Sans", sans-serif; fill: #fff; text-anchor: middle; }
.foot { margin-top: auto; height: 138px; flex: none; background: #feefe2; display: flex; justify-content: center; align-items: flex-start; gap: 137px; padding: 29px 7px 0 0; }
.foot-item { display: flex; flex-direction: column; align-items: center; color: #e07008; font-size: 22px; line-height: 26px; }
.foot-ico { display: block; margin-bottom: 3px; }
.far { margin-left: 17px; }
```
